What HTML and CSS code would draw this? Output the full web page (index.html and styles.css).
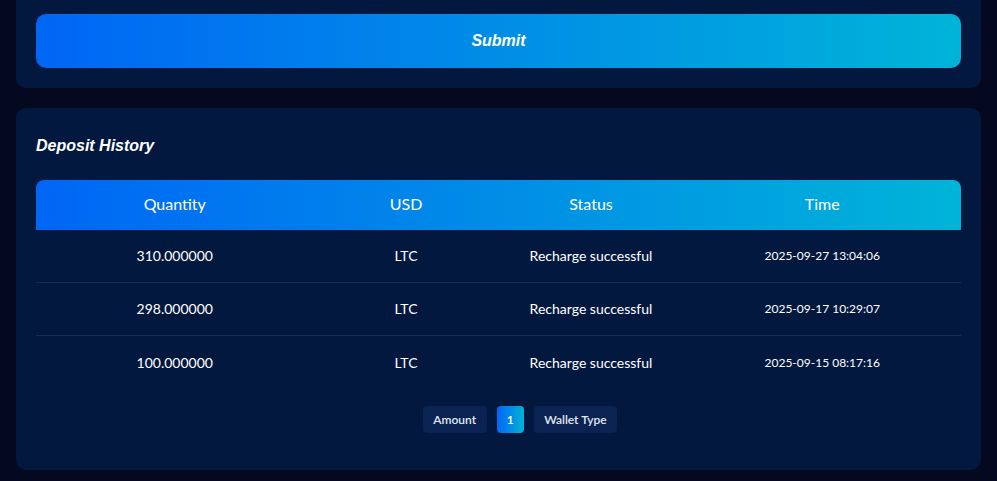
FILE: index.html
```html
<!DOCTYPE html>
<html>
<head>
<meta charset="utf-8">
<link rel="stylesheet" href="styles.css">
</head>
<body>
<div class="page">
  <div class="card card-top">
    <button class="submit">Submit</button>
  </div>
  <div class="card card-history">
    <h2 class="title">Deposit History</h2>
    <div class="table">
      <div class="row head">
        <div>Quantity</div><div>USD</div><div>Status</div><div>Time</div>
      </div>
      <div class="row">
        <div>310.000000</div><div>LTC</div><div>Recharge successful</div><div class="time">2025-09-27 13:04:06</div>
      </div>
      <div class="row">
        <div>298.000000</div><div>LTC</div><div>Recharge successful</div><div class="time">2025-09-17 10:29:07</div>
      </div>
      <div class="row">
        <div>100.000000</div><div>LTC</div><div>Recharge successful</div><div class="time">2025-09-15 08:17:16</div>
      </div>
    </div>
    <div class="pager">
      <span class="pbtn">Amount</span>
      <span class="pbtn active">1</span>
      <span class="pbtn">Wallet Type</span>
    </div>
  </div>
</div>
</body>
</html>
```
FILE: styles.css
```css
html, body {
  margin: 0;
  padding: 0;
  background: #040920;
}
body {
  font-family: "Lato", "Noto Sans", sans-serif;
  color: #fff;
}
.page {
  padding: 0 16px;
  display: flex;
  flex-direction: column;
  gap: 20px;
}
.card {
  background: #03183f;
  border-radius: 10px;
}
.card-top {
  border-radius: 0 0 10px 10px;
  padding: 14px 20px 20px;
}
.submit {
  display: block;
  width: 100%;
  height: 54px;
  border: 0;
  border-radius: 10px;
  background: linear-gradient(90deg, #0066f5, #00b4d8);
  color: #fff;
  font-family: "Liberation Sans", Arial, sans-serif;
  font-weight: bold;
  font-style: italic;
  font-size: 16px;
  padding: 0;
}
.card-history {
  padding: 22px 20px 37px;
}
.title {
  margin: 0 0 18px;
  font-family: "Liberation Sans", Arial, sans-serif;
  font-weight: bold;
  font-style: italic;
  font-size: 16px;
  line-height: 32px;
}
.table {
  display: flex;
  flex-direction: column;
}
.row {
  display: grid;
  grid-template-columns: 3fr 2fr 2fr 3fr;
  box-sizing: border-box;
  height: 53px;
  padding-bottom: 2px;
  align-items: center;
  text-align: center;
  font-size: 14px;
  border-bottom: 1px solid #1a2c4f;
}
.row:last-child {
  border-bottom: 0;
  height: 54px;
}
.row.head {
  height: 50px;
  padding-bottom: 3px;
  border-bottom: 0;
  border-radius: 8px 8px 0 0;
  background: linear-gradient(90deg, #0066f5, #00b4d8);
  font-size: 16px;
}
.time {
  font-size: 12px;
}
.pager {
  margin-top: 16px;
  padding-left: 43px;
  display: flex;
  justify-content: center;
  gap: 10px;
}
.pbtn {
  height: 27px;
  min-width: 27px;
  box-sizing: border-box;
  padding: 0 10.5px;
  display: flex;
  align-items: center;
  justify-content: center;
  border-radius: 4px;
  background: #0a2352;
  color: #e4eaf3;
  font-size: 12px;
  font-weight: 600;
}
.pbtn.active {
  padding: 0;
  background: linear-gradient(90deg, #0066f5, #00b4d8);
  color: #fff;
}
```
